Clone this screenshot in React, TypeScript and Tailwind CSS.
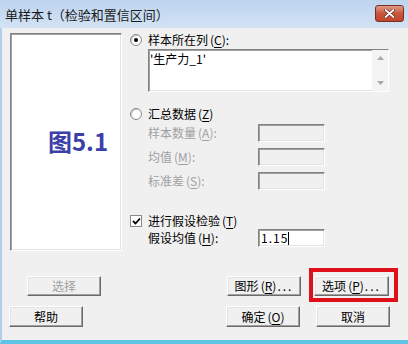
import React from "react";

const font = { fontFamily: '"Noto Sans CJK SC", "Liberation Sans", sans-serif' };

function K({ c }: { c: string }) {
  return (
    <span className="ml-[2px]">
      (<span className="underline underline-offset-2">{c}</span>)
    </span>
  );
}

function Btn({
  children,
  w = "w-[74px]",
  h = "h-[20px]",
  disabled = false,
  className = "",
}: {
  children: React.ReactNode;
  w?: string;
  h?: string;
  disabled?: boolean;
  className?: string;
}) {
  return (
    <div
      className={`${w} ${h} ${className} flex items-center justify-center border border-t-white border-l-white border-r-[#6b6b6b] border-b-[#6b6b6b] bg-[#f0f0f0] shadow-[inset_-1px_-1px_0_#a0a0a0,inset_1px_1px_0_#e3e3e3] text-[12px] leading-none ${
        disabled ? "text-[#a0a0a0]" : "text-black"
      }`}
    >
      {children}
    </div>
  );
}

function Radio({ checked }: { checked?: boolean }) {
  return (
    <div className="w-[12px] h-[12px] rounded-full border border-[#8a8a8a] bg-white flex items-center justify-center shadow-[inset_1px_1px_0_#c8c8c8]">
      {checked && <div className="w-[4px] h-[4px] rounded-full bg-black" />}
    </div>
  );
}

function Sunken({ className = "", white = true, children }: { className?: string; white?: boolean; children?: React.ReactNode }) {
  return (
    <div
      className={`${className} border border-t-[#828282] border-l-[#828282] border-b-white border-r-white shadow-[inset_1px_1px_0_#a0a0a0,inset_-1px_-1px_0_#e3e3e3] ${
        white ? "bg-white" : "bg-[#f0f0f0]"
      }`}
    >
      {children}
    </div>
  );
}

export default function App() {
  return (
    <div className="w-[408px] h-[344px] relative overflow-hidden bg-[#f0f0f0] flex flex-col" style={font}>
      {/* Title bar */}
      <div className="h-[28px] flex items-center justify-between bg-gradient-to-b from-[#bcd4ee] to-[#d3e3f4] shrink-0">
        <span className="pl-[5px] text-[13px] text-[#1a1a1a] leading-none">单样本 t（检验和置信区间）</span>
        <div className="mr-[4px] mb-[2px] w-[29px] h-[17px] rounded-[3px] border border-[#7b2d22] bg-gradient-to-b from-[#e29a86] via-[#c8553c] to-[#c1452c] flex items-center justify-center">
          <svg width="11" height="9" viewBox="0 0 11 9">
            <path d="M1.5 1 L9.5 8 M9.5 1 L1.5 8" stroke="#5a1c12" strokeWidth="3" strokeLinecap="round" />
            <path d="M1.5 1 L9.5 8 M9.5 1 L1.5 8" stroke="white" strokeWidth="1.8" strokeLinecap="round" />
          </svg>
        </div>
      </div>

      {/* Body */}
      <div className="flex-1 flex flex-col border-l-2 border-l-[#b4cde8] border-b-4 border-b-[#5fc3e6] pl-[8px] pt-[5px]">
        <div className="flex h-[218px]">
          {/* List box */}
          <Sunken className="w-[112px] h-[218px] flex items-center justify-center">
            <span className="text-[24px] font-bold text-[#3a40a8] leading-none ml-[24px] mt-[-2px]">图5.1</span>
          </Sunken>

          {/* Right form */}
          <div className="ml-[8px] flex flex-col text-[12px] leading-none text-black">
            <div className="h-[13px] flex items-center">
              <Radio checked />
              <span className="ml-[6px]">
                样本所在列<K c="C" />:
              </span>
            </div>
            <Sunken className="ml-[18px] mt-[3px] w-[241px] h-[43px] flex">
              <div className="flex-1 pl-[1px] pt-[3px] text-[12px]">'生产力_1'</div>
              <div className="w-[16px] bg-[#f4f4f4] flex flex-col items-center justify-between py-[6px]">
                <svg width="7" height="4" viewBox="0 0 7 4">
                  <path d="M0 4 L3.5 0 L7 4 Z" fill="#a8a8a8" />
                </svg>
                <svg width="7" height="4" viewBox="0 0 7 4">
                  <path d="M0 0 L3.5 4 L7 0 Z" fill="#a8a8a8" />
                </svg>
              </div>
            </Sunken>

            <div className="h-[13px] flex items-center mt-[15px]">
              <Radio />
              <span className="ml-[6px]">
                汇总数据<K c="Z" />
              </span>
            </div>

            {[
              ["样本数量", "A"],
              ["均值", "M"],
              ["标准差", "S"],
            ].map(([t, k], i) => (
              <div key={k} className={`flex items-center ${i === 0 ? "mt-[4px]" : "mt-[6px]"}`}>
                <span className="ml-[18px] w-[110px] text-[#a0a0a0]">
                  {t}
                  <K c={k} />:
                </span>
                <Sunken white={false} className="w-[67px] h-[18px]" />
              </div>
            ))}

            <div className="h-[13px] flex items-center mt-[24px]">
              <div className="w-[12px] h-[12px] border border-[#8a8a8a] bg-white flex items-center justify-center">
                <svg width="9" height="8" viewBox="0 0 9 8">
                  <path d="M1 4 L3.5 6.5 L8 1.5" stroke="black" strokeWidth="1.8" fill="none" />
                </svg>
              </div>
              <span className="ml-[6px]">
                进行假设检验<K c="T" />
              </span>
            </div>

            <div className="flex items-center mt-[2px]">
              <span className="ml-[18px] w-[110px]">
                假设均值<K c="H" />:
              </span>
              <Sunken className="w-[67px] h-[18px] flex items-center pl-[2px]">
                <span className="tracking-[1px]">1.15</span>
                <span className="w-[1px] h-[13px] bg-black" />
              </Sunken>
            </div>
          </div>
        </div>

        {/* Button rows */}
        <div className="flex mt-[25px] relative">
          <Btn disabled className="ml-[17px]">
            选择
          </Btn>
          <Btn className="ml-[126px]">
            图形<K c="R" />
            <span className="tracking-[2px] ml-[1px]">...</span>
          </Btn>
          <Btn w="w-[75px]" className="ml-[13px]">
            选项<K c="P" />
            <span className="tracking-[2px] ml-[1px]">...</span>
          </Btn>
          <div className="absolute left-[299px] top-[-8px] w-[89px] h-[34px] border-[4px] border-[#e0101a]" />
        </div>
        <div className="flex mt-[10px]">
          <Btn h="h-[21px]" className="ml-[-1px]">
            帮助
          </Btn>
          <Btn h="h-[21px]" className="ml-[143px]">
            确定<K c="O" />
          </Btn>
          <Btn h="h-[21px]" className="ml-[16px]">
            取消
          </Btn>
        </div>
      </div>
    </div>
  );
}
